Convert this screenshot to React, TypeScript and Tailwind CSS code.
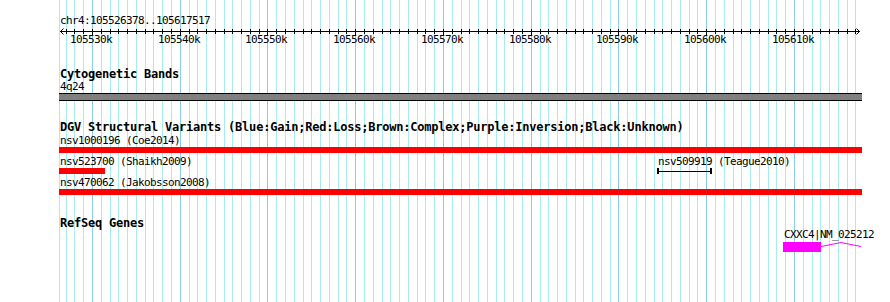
const START_KB = 105526.378;
const PX_PER_KB = 8.775;
const LEFT = 59;

// page x of a position given in kb
const xAt = (kb: number) => Math.round(60.2 + (kb - START_KB) * PX_PER_KB);

const gridKb = Array.from({ length: 91 }, (_, i) => 105527 + i);
const isMajor = (kb: number) => kb % 10 === 0;

const small = 'text-[11px] leading-[12px] tracking-[-0.62px] whitespace-pre';
const bold = 'text-[12px] leading-[13px] font-bold tracking-[-0.22px] whitespace-pre';

const Grid = () => (
  <svg className="absolute inset-0" width={890} height={302}>
    <rect x={59} y={0} width={1} height={302} fill="#a9ecf0" />
    {gridKb.map((kb) => (
      <rect
        key={kb}
        x={xAt(kb)}
        y={0}
        width={1}
        height={302}
        fill={isMajor(kb) ? '#8ccbf0' : '#a9ecf0'}
      />
    ))}
  </svg>
);

const Ruler = () => (
  <div className="relative h-[20px] w-[803px]">
    <svg className="absolute inset-0" width={803} height={20}>
      {/* axis */}
      <rect x={1} y={4} width={800} height={1} fill="#000" />
      <path d="M1.5 4.5 L4.5 1.5 M1.5 4.5 L4.5 7.5" stroke="#000" strokeWidth={1} fill="none" />
      <path d="M800.5 4.5 L797.5 1.5 M800.5 4.5 L797.5 7.5" stroke="#000" strokeWidth={1} fill="none" />
      {gridKb.map((kb) => (
        <rect
          key={kb}
          x={xAt(kb) - LEFT}
          y={2}
          width={1}
          height={isMajor(kb) ? 6 : 5}
          fill="#000"
        />
      ))}
    </svg>
    {gridKb.filter(isMajor).map((kb) => (
      <span
        key={kb}
        className={`absolute top-[7px] ${small}`}
        style={{ left: xAt(kb) - LEFT - 22 }}
      >
        {kb}k
      </span>
    ))}
  </div>
);

type Feature = {
  name: string;
  x: number; // page x
  w: number;
  kind: 'bar' | 'interval';
};

const dgvRows: Feature[][] = [
  [{ name: 'nsv1000196 (Coe2014)', x: 59, w: 803, kind: 'bar' }],
  [
    { name: 'nsv523700 (Shaikh2009)', x: 59, w: 46, kind: 'bar' },
    { name: 'nsv509919 (Teague2010)', x: 657, w: 55, kind: 'interval' },
  ],
  [{ name: 'nsv470062 (Jakobsson2008)', x: 59, w: 803, kind: 'bar' }],
];

const FeatureGlyph = ({ f }: { f: Feature }) => (
  <div className="absolute top-0 h-[18px]" style={{ left: f.x - LEFT + 1 }}>
    <p className={small}>{f.name}</p>
    {f.kind === 'bar' ? (
      <div className="h-[6px] bg-[#ff0000]" style={{ width: f.w, marginLeft: -1 }} />
    ) : (
      <div className="relative h-[6px]" style={{ width: f.w, marginLeft: -1 }}>
        <div className="absolute left-0 top-0 h-[6px] w-[2px] bg-black" />
        <div className="absolute left-0 right-0 top-[3px] h-px bg-black" />
        <div className="absolute right-0 top-0 h-[6px] w-[2px] bg-black" />
      </div>
    )}
  </div>
);

export default function App() {
  return (
    <div className="relative w-[890px] h-[302px] overflow-hidden bg-white text-black font-['DejaVu_Sans_Mono','Liberation_Mono',monospace]">
      <Grid />
      <div className="relative flex flex-col pl-[59px] pt-[15px]">
        <p className={`pl-px ${small}`}>chr4:105526378..105617517</p>
        <Ruler />

        {/* Cytogenetic bands */}
        <section className="mt-[21px]">
          <h3 className={`pl-px ${bold}`}>Cytogenetic Bands</h3>
          <p className={`pl-px ${small}`}>4q24</p>
          <div className="h-[8px] w-[803px] border-y border-black bg-[#808080]" />
        </section>

        {/* DGV */}
        <section className="mt-[20px]">
          <h3 className={`pl-px ${bold}`}>
            DGV Structural Variants (Blue:Gain;Red:Loss;Brown:Complex;Purple:Inversion;Black:Unknown)
          </h3>
          <div className="mt-px flex flex-col gap-[3px]">
            {dgvRows.map((row, i) => (
              <div key={i} className="relative h-[18px] w-[803px]">
                {row.map((f) => (
                  <FeatureGlyph key={f.name} f={f} />
                ))}
              </div>
            ))}
          </div>
        </section>

        {/* RefSeq */}
        <section className="mt-[22px]">
          <h3 className={`pl-px text-[12px] leading-[12px] font-bold tracking-[-0.22px]`}>RefSeq Genes</h3>
          <div className="relative h-[24px] w-[803px]">
            <div className="absolute top-0" style={{ left: 783 - LEFT + 1 }}>
              <p className={small}>CXXC4|NM_025212</p>
            </div>
            <svg
              className="absolute top-[13px]"
              style={{ left: 783 - LEFT }}
              width={80}
              height={11}
            >
              <rect x={0} y={0} width={38} height={10} fill="#ff00ff" />
              <polyline
                points="38,4.5 58,0.5 78,4.5"
                stroke="#ff00ff"
                strokeWidth={1}
                fill="none"
              />
            </svg>
          </div>
        </section>
      </div>
    </div>
  );
}
